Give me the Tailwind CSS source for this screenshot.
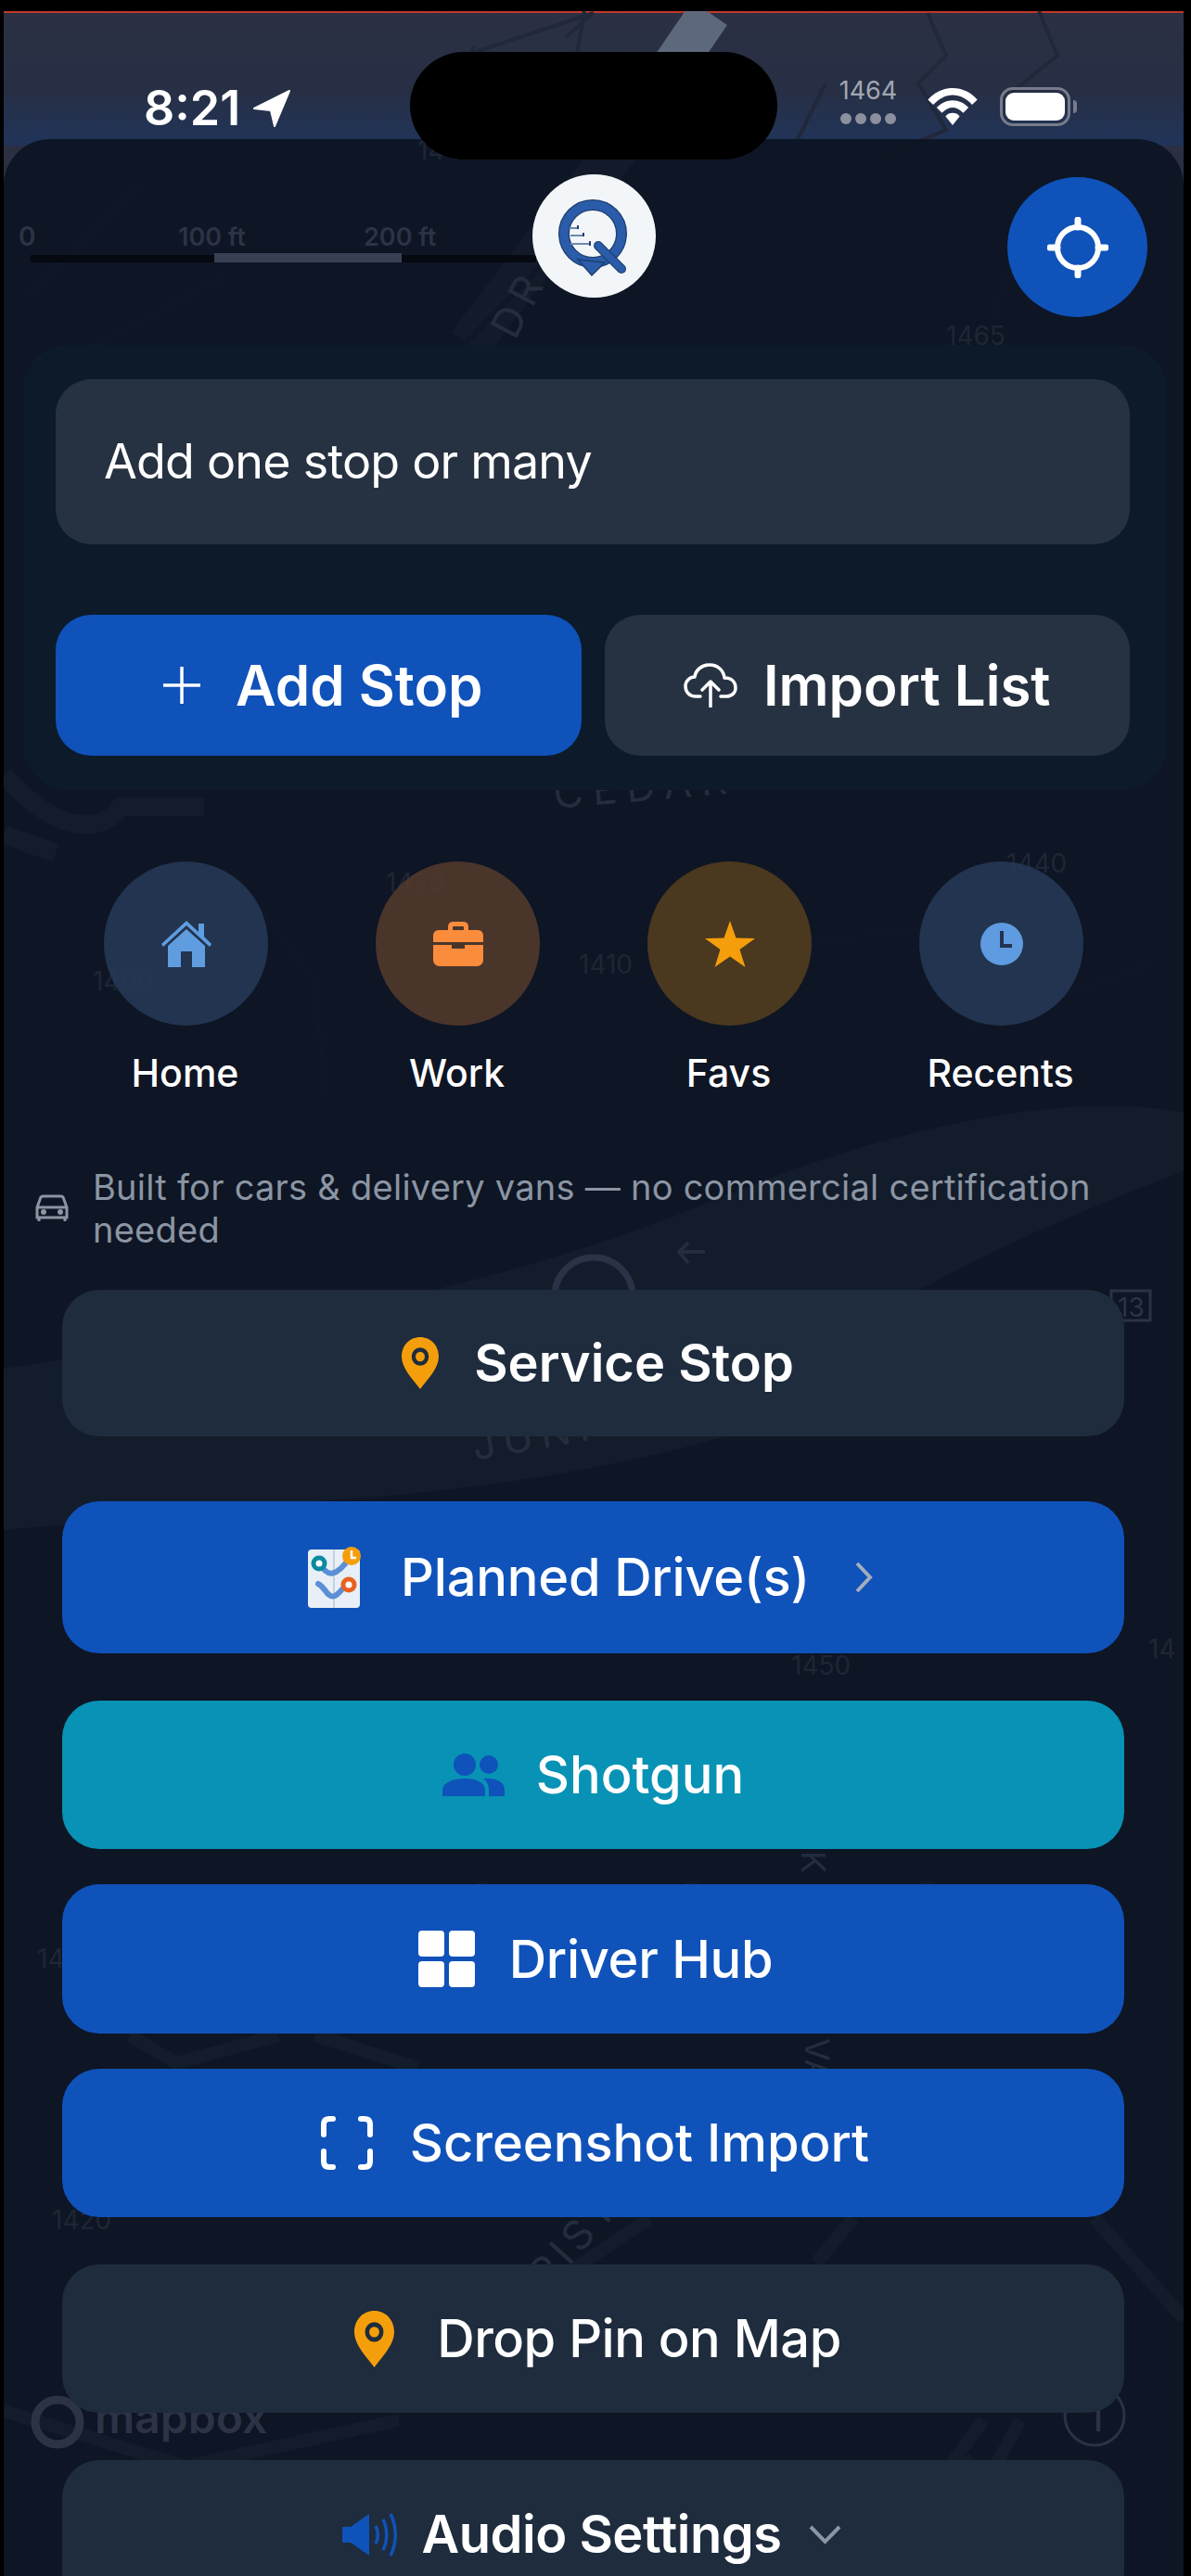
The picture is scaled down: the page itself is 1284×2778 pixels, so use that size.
<!DOCTYPE html>
<html lang="en">
<head>
<meta charset="UTF-8">
<meta name="viewport" content="width=device-width, initial-scale=1.0">
<title>Add stops</title>
<script src="https://cdn.jsdelivr.net/npm/@tailwindcss/browser@4"></script>
</head>
<body class="bg-black font-['Inter','Liberation_Sans',sans-serif]">
<div class="w-[1284px] h-[2778px] pt-[12px] pl-[4px] overflow-hidden bg-black">
  <div class="relative w-[1272px] h-[2766px] overflow-hidden">

    <!-- map behind everything -->
    <svg class="absolute inset-0 w-full h-full" viewBox="4 12 1272 2766" fill="none">
      <defs>
        <linearGradient id="sky" x1="0" y1="0" x2="0" y2="1">
          <stop offset="0" stop-color="#2b3043"/>
          <stop offset="0.6" stop-color="#272f45"/>
          <stop offset="1" stop-color="#20345a"/>
        </linearGradient>
      </defs>
      <rect x="4" y="12" width="1272" height="2766" fill="#2a3042"/>
      <rect x="4" y="12" width="1272" height="145" fill="url(#sky)"/>
      <rect x="4" y="12" width="1272" height="2" fill="#c0392b"/>
      <path d="M765 14 L655 175 L505 372" stroke="#5d687c" stroke-width="46"/>
      <path d="M640 14 L610 40 M640 14 L500 60 M510 50 L505 130 M630 12 L610 130" stroke="#20283a" stroke-width="4"/>
      <path d="M1000 14 L1020 60 L990 90 L1020 140 L950 170 M890 90 L860 150 M1020 60 L1000 14 M1120 12 L1140 60 L1090 100" stroke="#20283a" stroke-width="4"/>
      <path d="M4 1476 C240 1440 520 1400 780 1290 C900 1240 1120 1170 1276 1200 L1276 1263 C1100 1330 900 1420 778 1550 C640 1590 480 1610 352 1618 L4 1650 Z" fill="#626f85"/>
      <path d="M520 2030 L545 2190 M745 2030 L755 2190 M1000 2030 L1010 2190 M140 2195 L190 2225 L300 2195 M340 2195 L450 2230" stroke="#626f85" stroke-width="14"/>
      <path d="M4 835 C60 900 110 900 130 870 L220 870 M4 900 L60 920" stroke="#626f85" stroke-width="20"/>
      <path d="M570 2480 L700 2392 M880 2440 L920 2392 M1180 2392 L1276 2500 M4 2600 L200 2660 L430 2610 M980 2720 L1060 2610 M1040 2650 L1130 2790 M1100 2610 L1040 2720" stroke="#626f85" stroke-width="14"/>
      <path d="M620 250 L500 372 M1100 250 L1060 372 M150 200 L30 320 M240 300 L100 372 M260 950 L340 1060 L350 1180 M800 1020 L1040 1000 M1040 1110 L1240 1040" stroke="#3a445a" stroke-width="6"/>
    </svg>

    <!-- status bar -->
    <div class="relative h-[138px] text-white">
      <div class="absolute left-[438px] top-[44px] w-[396px] h-[116px] rounded-[58px] bg-black z-20"></div>
      <div class="absolute left-[151px] top-[75px] flex items-center gap-[13px]">
        <span class="font-semibold text-[52px] leading-[60px]">8:21</span>
        <svg class="w-[42px] h-[42px]" viewBox="0 0 42 42" fill="#fff" stroke="#fff" stroke-width="2" stroke-linejoin="round"><path d="M40 2 L24 40 L20 23 L2 21 Z"/></svg>
      </div>
      <div class="absolute left-[896px] top-[70px] flex flex-col items-center w-[72px]">
        <span class="text-[27px] leading-[32px] text-[#a2a7b2]">1464</span>
        <div class="flex gap-[4px] mt-[8px]">
          <span class="w-[12px] h-[12px] rounded-full bg-[#8b909c]"></span>
          <span class="w-[12px] h-[12px] rounded-full bg-[#8b909c]"></span>
          <span class="w-[12px] h-[12px] rounded-full bg-[#8b909c]"></span>
          <span class="w-[12px] h-[12px] rounded-full bg-[#8b909c]"></span>
        </div>
      </div>
      <svg class="absolute left-[996px] top-[83px] w-[54px] h-[40px]" viewBox="0 0 56 42" fill="#fff">
        <path d="M28 0 C39 0 49 5 56 13 L50 19 C44 12 36 8 28 8 C20 8 12 12 6 19 L0 13 C7 5 17 0 28 0 Z"/>
        <path d="M28 14 C35 14 41 17 46 22 L40 28 C36 24 32 22 28 22 C24 22 20 24 16 28 L10 22 C15 17 21 14 28 14 Z"/>
        <path d="M28 28 C31 28 34 29 36 32 L28 42 L20 32 C22 29 25 28 28 28 Z"/>
      </svg>
      <div class="absolute left-[1074px] top-[82px] flex items-center">
        <div class="w-[76px] h-[42px] rounded-[14px] border-[3px] border-[#767c8a] p-[3px]">
          <div class="w-full h-full rounded-[9px] bg-white"></div>
        </div>
        <div class="ml-[3px] w-[4px] h-[14px] rounded-r-full bg-[#767c8a]"></div>
      </div>
    </div>

    <!-- sheet -->
    <div class="relative h-[2628px] rounded-t-[50px] bg-[#0b1321]/90">
      <!-- map labels seen through the sheet -->
      <svg class="absolute inset-0 w-full h-full" viewBox="4 150 1272 2628" fill="#2c3345" font-family="Inter, sans-serif" font-weight="600">
        <text x="20" y="265" font-size="28">0</text>
        <text x="192" y="265" font-size="27">100 ft</text>
        <text x="392" y="265" font-size="27">200 ft</text>
        <rect x="33" y="275" width="198" height="8" fill="#06090f"/>
        <rect x="231" y="273" width="202" height="10" fill="#3a4054"/>
        <rect x="433" y="275" width="145" height="8" fill="#06090f"/>
        <g font-weight="400" fill="#1e2635" font-size="28">
          <text x="1020" y="372">1465</text>
          <text x="450" y="172">1440</text>
          <text x="100" y="1068">1400</text>
          <text x="624" y="1050">1410</text>
          <text x="1085" y="941">1440</text>
          <text x="416" y="962">1420</text>
          <text x="853" y="1806">1450</text>
          <text x="56" y="2404">1420</text>
          <text x="40" y="2122">14</text>
          <text x="1238" y="1788">14</text>
        </g>
        <g font-weight="400" fill="#232d3d" font-size="44">
          <text x="598" y="872" letter-spacing="10" transform="rotate(-5 598 872)">CEDAR</text>
          <text x="512" y="1575" letter-spacing="8" transform="rotate(-10 512 1575)">JUNI</text>
          <text x="555" y="368" transform="rotate(-62 555 368)" letter-spacing="8">DR</text>
          <text x="590" y="2470" transform="rotate(-48 590 2470)" letter-spacing="6">RIST</text>
          <text x="862" y="2030" font-size="36" transform="rotate(90 880 2014)">K</text>
          <text x="868" y="2222" font-size="36" transform="rotate(90 880 2210)">VA</text>
        </g>
        <circle cx="640" cy="1398" r="42" stroke="#2a3245" stroke-width="7" fill="none"/>
        <path d="M760 1350 L732 1350 M742 1340 L732 1350 L742 1362" stroke="#232d3d" stroke-width="4" fill="none"/>
        <rect x="1198" y="1392" width="42" height="32" stroke="#2a3245" stroke-width="3" fill="none"/>
        <text x="1205" y="1420" font-size="28" font-weight="400">13</text>
        <circle cx="1180" cy="2605" r="32" stroke="#2a3245" stroke-width="3" fill="none"/>
        <text x="1172" y="2622" font-size="44" font-weight="400">1</text>
        <circle cx="62" cy="2612" r="24" stroke="#2c3345" stroke-width="9" fill="none"/>
        <text x="102" y="2624" font-size="48">mapbox</text>
      </svg>

      <div class="relative">
        <!-- logo and locate button -->
        <div class="grid grid-cols-[1fr_133px_1fr] items-start h-[222px] pt-[38px]">
          <div></div>
          <div class="w-[133px] h-[133px] rounded-full bg-[#f3f6f9]">
            <svg class="w-full h-full" viewBox="0 0 133 133" fill="none">
              <circle cx="65" cy="64" r="31" stroke="#1f3f6e" stroke-width="12"/>
              <circle cx="65" cy="64" r="31" stroke="#2a5caa" stroke-width="9.5"/>
              <path d="M49 92 L64 109 L78 95 Z" fill="#2a5caa" stroke="#1f3f6e" stroke-width="1.5"/>
              <path d="M71 77 L96 102" stroke="#1f3f6e" stroke-width="10" stroke-linecap="round"/>
              <path d="M71 77 L96 102" stroke="#2a5caa" stroke-width="7.5" stroke-linecap="round"/>
              <path d="M40 58 H49 M41 66 H55 M41 75 H62" stroke="#6f89ad" stroke-width="2"/>
              <path d="M49 55 V59 M55 63 V67 M62 72 V77" stroke="#1f3f6e" stroke-width="2"/>
            </svg>
          </div>
          <div class="justify-self-end mr-[39px] mt-[3px] w-[151px] h-[151px] rounded-full bg-[#0f52ba] flex items-center justify-center">
            <svg class="w-[66px] h-[66px]" viewBox="0 0 66 66" fill="none" stroke="#fff" stroke-linecap="round">
              <circle cx="33" cy="33" r="22" stroke-width="6"/>
              <path d="M33 3 V11 M33 55 V63 M3 33 H11 M55 33 H63" stroke-width="7"/>
            </svg>
          </div>
        </div>

        <!-- add stop card -->
        <div class="ml-[21px] mr-[18px] h-[480px] rounded-[48px] bg-[#0c1a2a] pl-[35px] pr-[40px] pt-[37px]">
          <div class="h-[178px] rounded-[38px] bg-[#263241] pl-[52px] flex items-center text-white text-[52px] tracking-[-0.8px]">Add one stop or many</div>
          <div class="mt-[76px] grid grid-cols-2 gap-[25px] text-white font-semibold text-[60px]">
            <div class="h-[152px] rounded-[38px] bg-[#0f52ba] pl-[10px] flex items-center justify-center gap-[38px]">
              <svg class="w-[40px] h-[40px]" viewBox="0 0 40 40" stroke="#fff" stroke-width="3.5"><path d="M20 0 V40 M0 20 H40"/></svg>
              <span>Add Stop</span>
            </div>
            <div class="h-[152px] rounded-[38px] bg-[#263241] flex items-center justify-center gap-[28px]">
              <svg class="w-[58px] h-[48px]" viewBox="0 0 58 48" fill="none" stroke="#fff" stroke-width="3.5" stroke-linecap="round" stroke-linejoin="round">
                <path d="M18 36 H13 C6 36 2 31 2 25 C2 19 7 15 12 15 C13 7 20 2 28 2 C37 2 43 8 44 16 C51 16 56 20 56 27 C56 32 52 36 46 36 H40"/>
                <path d="M29 47 V20 M20 29 L29 20 L38 29"/>
              </svg>
              <span>Import List</span>
            </div>
          </div>
        </div>

        <!-- shortcuts -->
        <div class="mt-[77px] pl-[50px] grid grid-cols-[repeat(4,293px)] text-white font-medium text-[41px] leading-[48px]">
          <div class="flex flex-col items-center">
            <div class="w-[177px] h-[177px] rounded-full bg-[#263957]/85 flex items-center justify-center">
              <svg class="w-[54px] h-[50px]" viewBox="0 0 54 50" fill="#5f9de0">
                <path d="M27 0 L40 12 V3 H46 V17 L54 25 L52 28 L27 5 L2 28 L0 25 Z"/>
                <path d="M27 9 L47 27 V50 H33 V33 H21 V50 H7 V27 Z"/>
              </svg>
            </div>
            <span class="mt-[27px] pr-[2px]">Home</span>
          </div>
          <div class="flex flex-col items-center">
            <div class="w-[177px] h-[177px] rounded-full bg-[#553b2d]/85 flex items-center justify-center">
              <svg class="w-[54px] h-[48px]" viewBox="0 0 54 48" fill="#fb8c3c">
                <path d="M16 10 V6 C16 2 18 0 22 0 H32 C36 0 38 2 38 6 V10 H33 V6 C33 5 32 5 32 5 H22 C22 5 21 5 21 6 V10 Z"/>
                <path d="M6 9 H48 C52 9 54 12 54 15 V22 H0 V15 C0 12 2 9 6 9 Z"/>
                <path d="M0 25 H20 V29 H34 V25 H54 V41 C54 45 51 48 47 48 H7 C3 48 0 45 0 41 Z"/>
              </svg>
            </div>
            <span class="mt-[27px] pr-[2px]">Work</span>
          </div>
          <div class="flex flex-col items-center">
            <div class="w-[177px] h-[177px] rounded-full bg-[#553e1e]/85 flex items-center justify-center">
              <svg class="w-[54px] h-[50px]" viewBox="0 0 54 50" fill="#f59e0b"><path d="M27 0 L33.5 18.5 L54 19 L37.5 31 L43.5 50 L27 38.5 L10.5 50 L16.5 31 L0 19 L20.5 18.5 Z"/></svg>
            </div>
            <span class="mt-[27px] pr-[2px]">Favs</span>
          </div>
          <div class="flex flex-col items-center">
            <div class="w-[177px] h-[177px] rounded-full bg-[#263957]/85 flex items-center justify-center">
              <svg class="w-[46px] h-[46px]" viewBox="0 0 46 46">
                <circle cx="23" cy="23" r="23" fill="#5f9be0"/>
                <path d="M23 9 V25 H34" fill="none" stroke="#22344f" stroke-width="4"/>
              </svg>
            </div>
            <span class="mt-[27px] pr-[2px]">Recents</span>
          </div>
        </div>

        <!-- note -->
        <div class="mt-[76px] pl-[34px] flex items-center gap-[26px] text-[#8b95a3] text-[38px] tracking-[0.25px] leading-[46px]">
          <svg class="w-[36px] h-[30px] shrink-0" viewBox="0 0 36 30" fill="none" stroke="#8b95a3" stroke-width="3">
            <path d="M2 14 L6 3 C7 2 8 2 9 2 H27 C28 2 29 2 30 3 L34 14 V25 H2 Z"/>
            <path d="M2 14 H34 M4 25 V29 M32 25 V29" />
            <circle cx="9" cy="19" r="1.5" fill="#8b95a3"/>
            <circle cx="27" cy="19" r="1.5" fill="#8b95a3"/>
          </svg>
          <p class="w-[1110px]">Built for cars &amp; delivery vans — no commercial certification needed</p>
        </div>

        <!-- action buttons -->
        <div class="ml-[63px] w-[1145px] mt-[42px] text-white text-[56px]">
          <div class="h-[158px] rounded-[40px] bg-[#1e2c3d] pl-[10px] flex items-center justify-center gap-[38px] font-semibold">
            <svg class="w-[40px] h-[56px]" viewBox="0 0 42 56" preserveAspectRatio="none">
              <path d="M21 0 C33 0 42 9 42 21 C42 33 30 45 21 56 C12 45 0 33 0 21 C0 9 9 0 21 0 Z" fill="#f59e0b"/>
              <circle cx="21" cy="21" r="7.5" fill="none" stroke="#1e2c3d" stroke-width="4.5"/>
            </svg>
            <span>Service Stop</span>
          </div>
          <div class="mt-[70px] h-[164px] rounded-[40px] bg-[#0f52ba] pr-[7px] flex items-center justify-center font-medium">
            <svg class="w-[58px] h-[66px]" viewBox="0 0 58 66" fill="none">
              <rect x="1" y="3" width="56" height="63" rx="4" fill="#e8eff6"/>
              <path d="M29 3 V66" stroke="#c7d2de" stroke-width="2"/>
              <path d="M14 18 C22 34 32 32 46 12" stroke="#5b8fd6" stroke-width="6" stroke-linecap="round"/>
              <path d="M12 40 C20 44 22 56 30 53 C36 50 38 44 44 40" stroke="#5b8fd6" stroke-width="6" stroke-linecap="round"/>
              <circle cx="13" cy="18" r="6" fill="#fff" stroke="#0b8aa0" stroke-width="5"/>
              <circle cx="45" cy="41" r="6" fill="#fff" stroke="#e8621f" stroke-width="5"/>
              <circle cx="48" cy="10" r="10" fill="#f59e0b"/>
              <path d="M48 4 V12 H53" stroke="#fff" stroke-width="2.5"/>
            </svg>
            <span class="ml-[43px] tracking-[-0.2px]">Planned Drive(s)</span>
            <svg class="ml-[48px] w-[20px] h-[34px]" viewBox="0 0 20 34" fill="none" stroke="#a3aebd" stroke-width="4"><path d="M3 2 L17 17 L3 32"/></svg>
          </div>
          <div class="mt-[51px] h-[160px] rounded-[40px] bg-[#0892b5] flex items-center justify-center gap-[34px] font-medium">
            <svg class="w-[67px] h-[46px]" viewBox="0 0 67 46" fill="#0f52ba">
              <circle cx="24" cy="12" r="12"/>
              <circle cx="50" cy="12" r="10"/>
              <path d="M0 46 V40 C0 31 12 27 24 27 C36 27 46 31 46 40 V46 Z"/>
              <path d="M50 46 V39 C50 34 48 30 44 27 C56 26 67 30 67 39 V46 Z"/>
            </svg>
            <span>Shotgun</span>
          </div>
          <div class="mt-[38px] h-[161px] rounded-[40px] bg-[#0f52ba] pl-[5px] flex items-center justify-center gap-[37px] font-medium">
            <div class="grid grid-cols-2 gap-[5px] w-[61px] h-[61px]">
              <span class="rounded-[4px] bg-white"></span>
              <span class="rounded-[4px] bg-white"></span>
              <span class="rounded-[4px] bg-white"></span>
              <span class="rounded-[4px] bg-white"></span>
            </div>
            <span class="tracking-[-0.3px]">Driver Hub</span>
          </div>
          <div class="mt-[38px] h-[160px] rounded-[40px] bg-[#0f52ba] pl-[4px] flex items-center justify-center gap-[40px] font-medium">
            <svg class="w-[56px] h-[58px]" viewBox="0 0 56 58" fill="none" stroke="#fff" stroke-width="6" stroke-linecap="round">
              <path d="M3 20 V9 C3 5 5 3 9 3 H13 M43 3 H47 C51 3 53 5 53 9 V20 M53 38 V49 C53 53 51 55 47 55 H43 M13 55 H9 C5 55 3 53 3 49 V38"/>
            </svg>
            <span>Screenshot Import</span>
          </div>
          <div class="mt-[51px] h-[160px] rounded-[40px] bg-[#1e2c3d] pl-[10px] flex items-center justify-center gap-[46px] font-medium">
            <svg class="w-[43px] h-[61px]" viewBox="0 0 42 56" preserveAspectRatio="none">
              <path d="M21 0 C33 0 42 9 42 21 C42 33 30 45 21 56 C12 45 0 33 0 21 C0 9 9 0 21 0 Z" fill="#f59e0b"/>
              <circle cx="21" cy="21" r="7.5" fill="none" stroke="#1e2c3d" stroke-width="4.5"/>
            </svg>
            <span class="tracking-[-0.5px]">Drop Pin on Map</span>
          </div>
          <div class="mt-[51px] h-[160px] rounded-[40px] bg-[#1e2c3d] pr-[3px] flex items-center justify-center font-semibold">
            <svg class="w-[60px] h-[47px]" viewBox="0 0 60 47" fill="none">
              <path d="M0 15 H9 L29 1 V46 L9 32 H0 Z" fill="#0f52ba"/>
              <path d="M36 14 C39 20 39 27 36 33 M44 7 C49 17 49 30 44 40 M52 1 C59 15 59 32 52 46" stroke="#0f52ba" stroke-width="3.5"/>
            </svg>
            <span class="ml-[26px] tracking-[-0.5px]">Audio Settings</span>
            <svg class="ml-[30px] w-[35px] h-[21px]" viewBox="0 0 35 21" fill="none" stroke="#8b95a3" stroke-width="4"><path d="M2 2 L17.5 18 L33 2"/></svg>
          </div>
        </div>
      </div>
    </div>
  </div>
</div>
</body>
</html>
